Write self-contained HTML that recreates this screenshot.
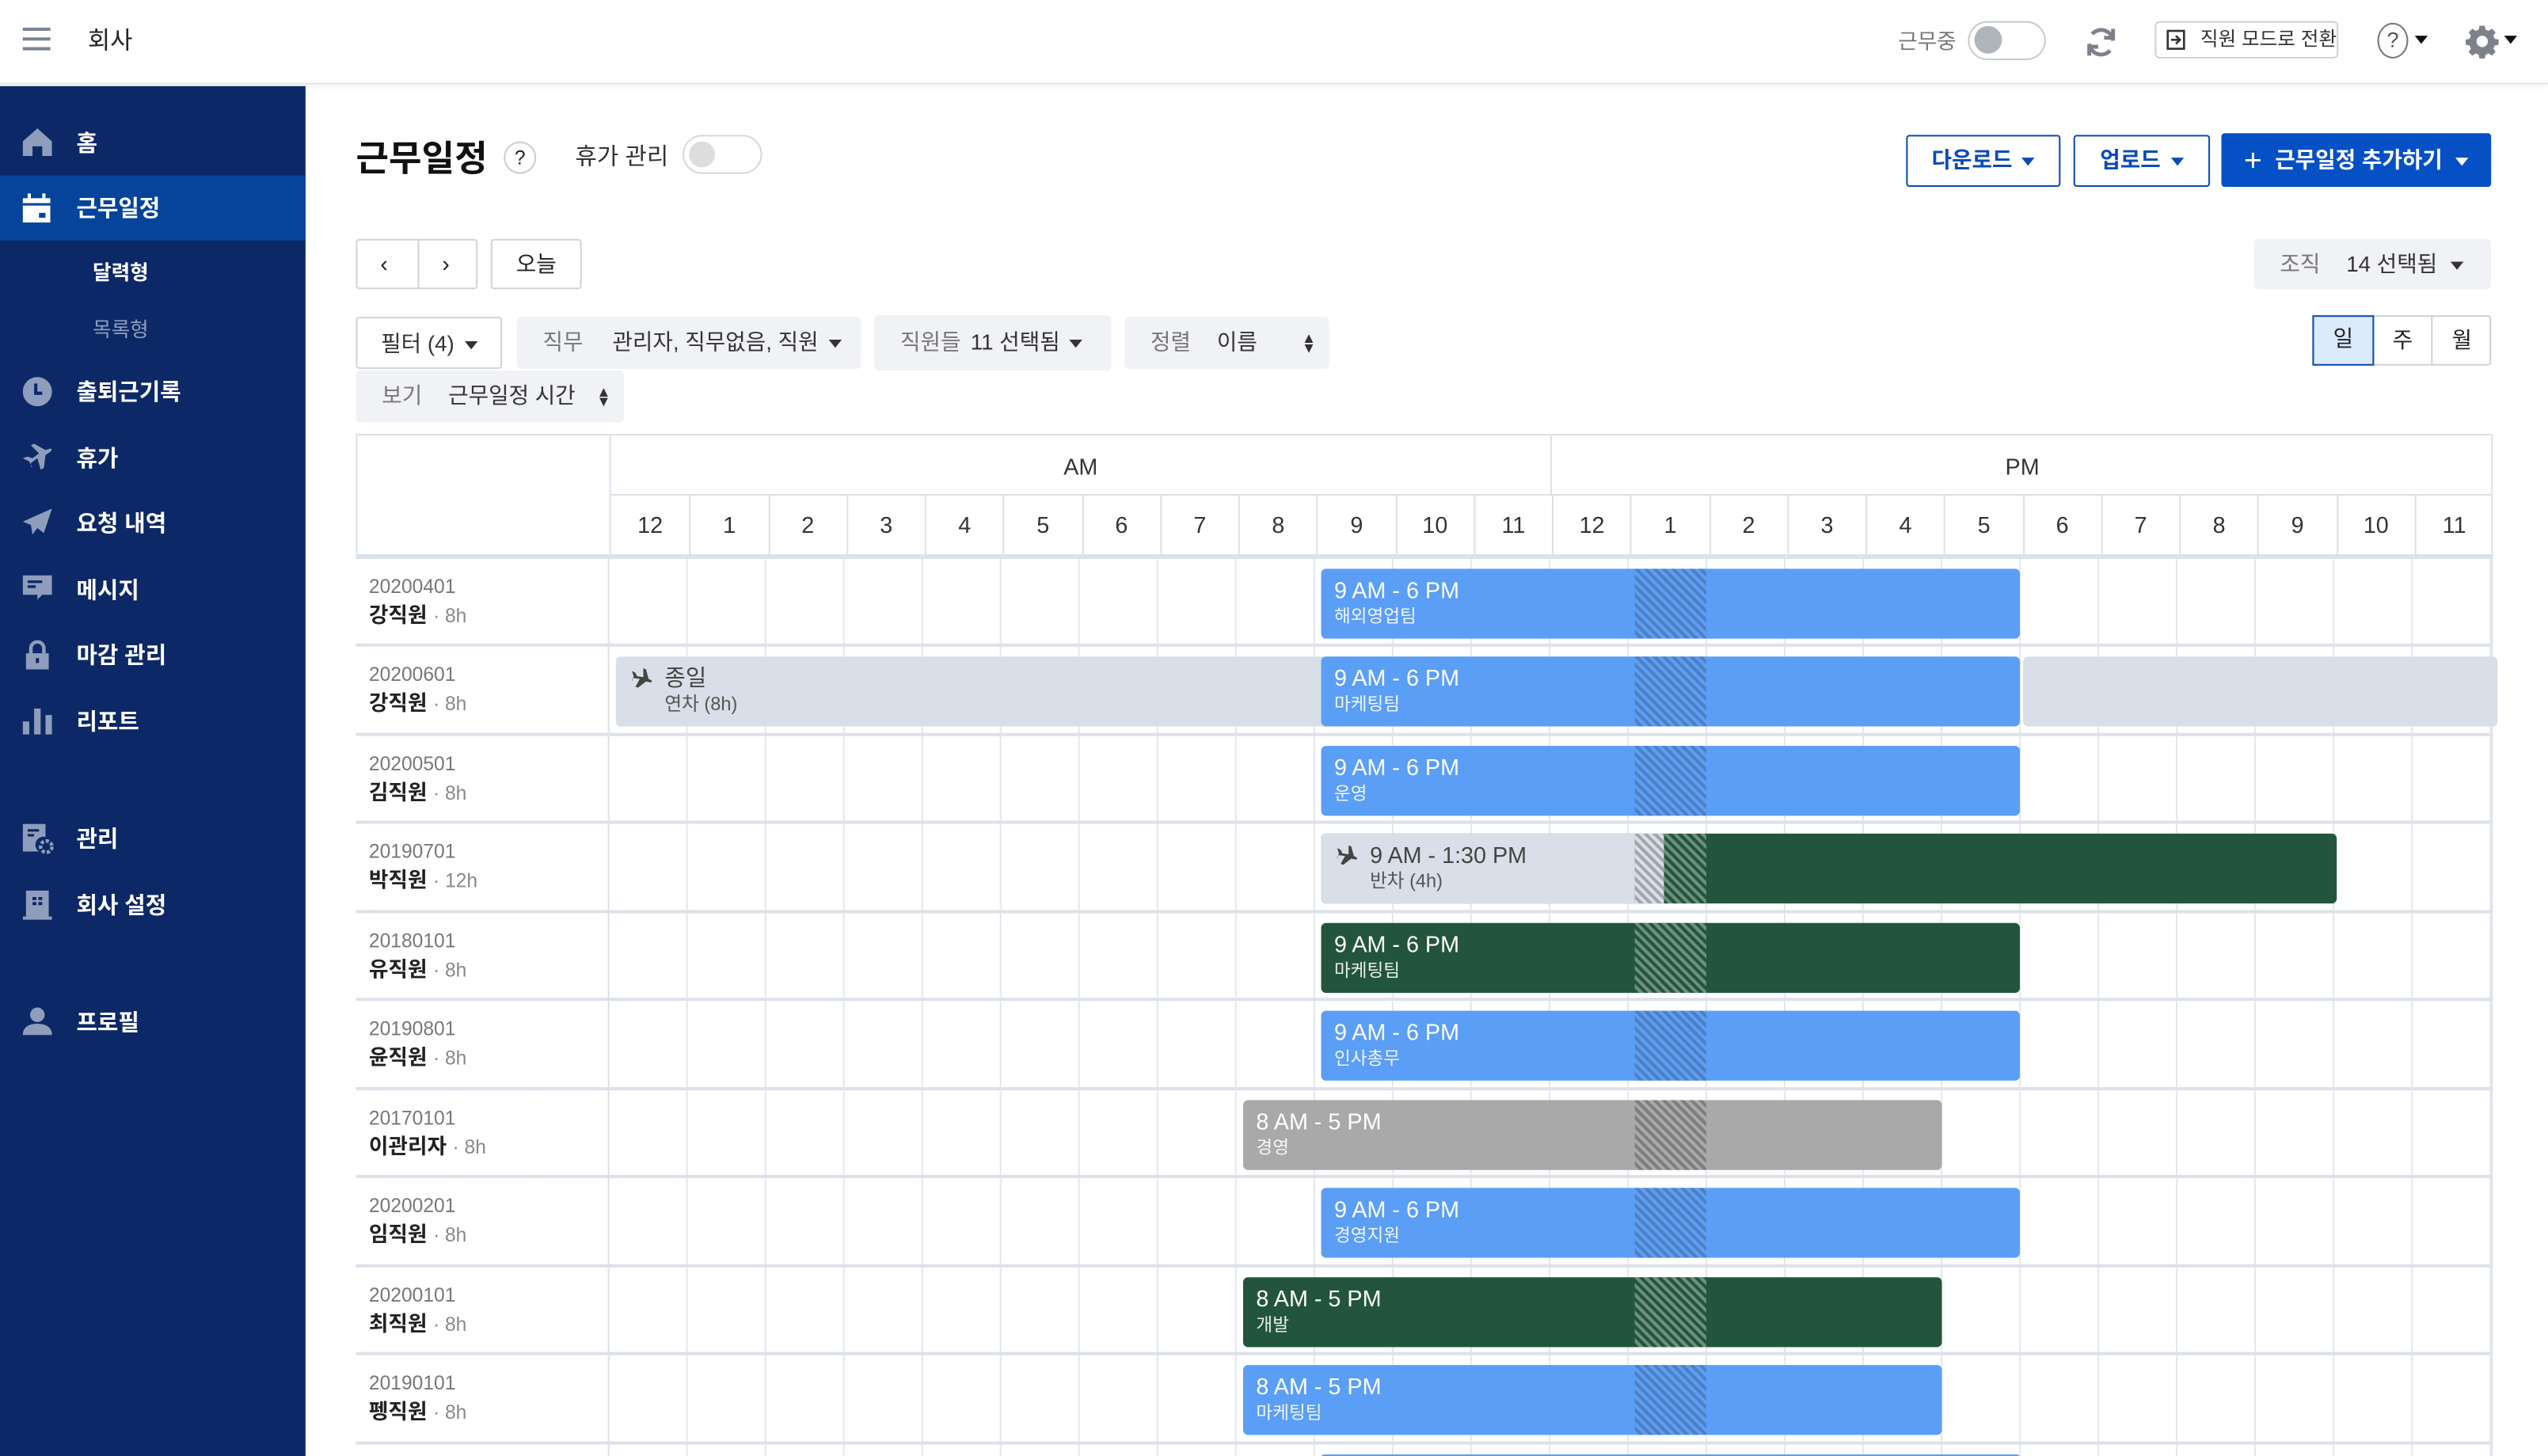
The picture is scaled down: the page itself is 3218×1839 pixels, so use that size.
<!DOCTYPE html>
<html><head><meta charset="utf-8">
<style>
*{box-sizing:border-box;margin:0;padding:0}
html,body{width:3218px;height:1839px;overflow:hidden;background:#fff}
body{font-family:"Liberation Sans","Noto Sans CJK KR",sans-serif;color:#222}
#w{position:absolute;left:0;top:0;width:3218px;height:1839px;overflow:hidden}
#s{width:1568px;height:896px;position:relative;transform:scale(2.05230,2.05246);transform-origin:0 0;overflow:hidden}
.a{position:absolute}
#hdr{left:0;top:0;width:1568px;height:52px;border-bottom:1px solid #e3e5e8;background:#fff;box-shadow:0 1px 4px rgba(0,0,0,.05)}
#side{left:0;top:53px;width:188px;height:843px;background:#0c2866}
.ni{position:absolute;left:0;width:188px;height:40px;color:#fff;font-size:14px;font-weight:bold;line-height:40px;padding-left:47px}
.ni svg{position:absolute;left:14px;top:11px}
.sub{position:absolute;left:57px;font-size:12.5px;font-weight:bold}
.btn{position:absolute;border:1px solid #d0d3d8;border-radius:2px;background:#fff;font-size:14px;text-align:center}
.gb{position:absolute;background:#f1f2f5;border-radius:3px;font-size:13.5px;color:#333;line-height:32px}
.gb .l{color:#777}
.tri{display:inline-block;width:0;height:0;border-left:4px solid transparent;border-right:4px solid transparent;border-top:5px solid currentColor;vertical-align:middle;margin-left:6px}
.upd{display:inline-block;font-size:9px;line-height:6px;vertical-align:middle;color:#333}
#grid{left:219px;top:267px;width:1315px;height:629px;border:1px solid #dde1e7;border-bottom:none}
.hc{position:absolute;top:37px;height:37px;width:48.25px;border-left:1px solid #dde1e7;text-align:center;line-height:37px;font-size:14px;color:#333}
.row{position:absolute;left:219px;width:1315px;height:55px;border-top:2px solid #dde2ea;background:repeating-linear-gradient(90deg,transparent 0,transparent 47.25px,#e4e7eb 47.25px,#e4e7eb 48.25px);background-position:156px 0;background-size:48.25px 100%}
.row .nm{position:absolute;left:0;top:0;width:156px;height:53px;background:#fff;border-right:1px solid #dde1e7;padding:8px 0 0 8px}
.nm .id{font-size:12px;color:#777;line-height:18px}
.nm .n{font-size:13px;font-weight:bold;color:#222;line-height:18px}
.nm .n span{font-weight:normal;color:#888;font-size:12px}
.bar{position:absolute;top:6px;height:43px;border-radius:3px;color:#fff;padding:4px 0 0 8px;overflow:hidden}
.bar .t{font-size:14px;line-height:18px;position:relative}
.bar .d{font-size:11px;line-height:17px;position:relative;opacity:.9}
.bl{background:#5b9ef6}
.gr{background:#23553d}
.gy{background:#a9a9a9}
.lv{background:#d9dfe8;color:#444}
.h{position:absolute;top:0;height:43px;width:44px}
.hb{background:repeating-linear-gradient(45deg,#5b9ef6 0,#5b9ef6 2px,#4f7fc0 2px,#4f7fc0 4px)}
.hg{background:repeating-linear-gradient(45deg,#23553d 0,#23553d 2px,#6d8f7d 2px,#6d8f7d 4px)}
.hy{background:repeating-linear-gradient(45deg,#a9a9a9 0,#a9a9a9 2px,#7e7e7e 2px,#7e7e7e 4px)}
.hl{background:repeating-linear-gradient(45deg,#d9dfe8 0,#d9dfe8 2px,#a2a6ac 2px,#a2a6ac 4px)}
</style></head><body><div id="w"><div id="s">

<div id="hdr" class="a">
  <div class="a" style="left:14px;top:17px;width:17px;height:2px;background:#7c8595;box-shadow:0 6px 0 #7c8595,0 12px 0 #7c8595"></div>
  <div class="a" style="left:54px;top:14px;font-size:15px">회사</div>
  <div class="a" style="left:1168px;top:15px;font-size:13px;color:#777">근무중</div>
  <div class="a" style="left:1211px;top:13px;width:48px;height:24px;border:1.5px solid #c8cbd0;border-radius:12px"><div class="a" style="left:3px;top:2px;width:17px;height:17px;border-radius:50%;background:#b0b4bb"></div></div>
  <svg class="a" style="left:1282px;top:15px" width="22" height="22" viewBox="0 0 24 24" fill="none" stroke="#7d818a" stroke-width="2.6"><path d="M20 11A8 8 0 0 0 6 6.5M4 13a8 8 0 0 0 14 4.5"/><path d="M20 3v6h-6" fill="none"/><path d="M4 21v-6h6"/></svg>
  <div class="a" style="left:1326px;top:13px;width:113px;height:23px;border:1px solid #cfd2d7;border-radius:3px;font-size:12px;line-height:21px;padding-left:27px;color:#333">직원 모드로 전환
    <svg class="a" style="left:6px;top:4px" width="12" height="13" viewBox="0 0 12 13" fill="none" stroke="#333" stroke-width="1.3"><rect x="1" y="1" width="10" height="11"/><path d="M3 6.5h5M6 4l2.5 2.5L6 9"/></svg></div>
  <div class="a" style="left:1463px;top:14px;width:19px;height:22px;border:1.4px solid #777;border-radius:50%;font-size:13px;text-align:center;line-height:20px;color:#555">?</div>
  <div class="a" style="left:1486px;top:22px;border-left:4px solid transparent;border-right:4px solid transparent;border-top:5px solid #111"></div>
  <svg class="a" style="left:1517px;top:15px" width="21" height="21" viewBox="0 0 24 24"><path fill="#7d818a" d="M10 1h4l.6 3 2.3 1 2.6-1.7 2.8 2.8L20.6 8.7l1 2.3 3 .6v4l-3 .6-1 2.3 1.7 2.6-2.8 2.8-2.6-1.7-2.3 1-.6 3h-4l-.6-3-2.3-1-2.6 1.7-2.8-2.8 1.7-2.6-1-2.3-3-.6v-4l3-.6 1-2.3L1.7 6.1l2.8-2.8L7.1 5l2.3-1z" transform="scale(.92) translate(1 0)"/><circle cx="12" cy="12" r="4" fill="#fff"/></svg>
  <div class="a" style="left:1541px;top:22px;border-left:4px solid transparent;border-right:4px solid transparent;border-top:5px solid #111"></div>
</div>

<div id="side" class="a">
  <div class="ni" style="top:15px"><svg width="18" height="17" viewBox="0 0 18 17"><path d="M9 0L0 8v9h6v-6h6v6h6V8z" fill="#8f9dbd"/></svg>홈</div>
  <div class="ni" style="top:55px;background:#05449a"><svg width="17" height="18" viewBox="0 0 17 18"><path d="M3 0h2v3h7V0h2v3h3v15H0V3h3z" fill="#fff"/><rect x="0" y="6" width="17" height="1.5" fill="#05449a"/><rect x="10" y="12" width="4" height="3" fill="#05449a"/></svg>근무일정</div>
  <div class="sub" style="top:104px;color:#fff">달력형</div>
  <div class="sub" style="top:139px;color:#8f9dbd;font-weight:normal">목록형</div>
  <div class="ni" style="top:168px"><svg width="18" height="18" viewBox="0 0 18 18"><circle cx="9" cy="9" r="9" fill="#8f9dbd"/><path d="M8 4v6h4" stroke="#0c2866" stroke-width="2" fill="none"/></svg>출퇴근기록</div>
  <div class="ni" style="top:209px"><svg width="18" height="17" viewBox="0 0 18 17"><path d="M0 9l3-1 3 1 4-3-5-5 2-1 7 4 3-1c1 0 1 1 0 2l-3 2-1 8-2 1-2-7-4 3v2L6 15l-2-4z" fill="#8f9dbd"/></svg>휴가</div>
  <div class="ni" style="top:249px"><svg width="18" height="17" viewBox="0 0 18 17"><path d="M18 0L0 8l5 2 1 6 3-4 4 3z" fill="#8f9dbd"/></svg>요청 내역</div>
  <div class="ni" style="top:290px"><svg width="18" height="17" viewBox="0 0 18 17"><path d="M0 0h18v12H12l-3 3v-3H0z" fill="#8f9dbd"/><path d="M3 4h9M3 7h5" stroke="#0c2866" stroke-width="1.6"/></svg>메시지</div>
  <div class="ni" style="top:330px"><svg width="18" height="18" viewBox="0 0 18 18"><path d="M5 8V5a4 4 0 0 1 8 0v3" stroke="#8f9dbd" stroke-width="2.2" fill="none"/><rect x="2" y="8" width="14" height="10" fill="#8f9dbd"/><rect x="8" y="11" width="2" height="3" fill="#0c2866"/></svg>마감 관리</div>
  <div class="ni" style="top:371px"><svg width="18" height="17" viewBox="0 0 18 17"><path d="M0 9h4v8H0zM7 1h4v16H7zM14 5h4v12h-4z" fill="#8f9dbd"/></svg>리포트</div>
  <div class="ni" style="top:443px"><svg width="19" height="19" viewBox="0 0 19 19"><path d="M0 0h14v8a5 5 0 0 0-4 9H0z" fill="#8f9dbd"/><path d="M3 4h7M3 7h4" stroke="#0c2866" stroke-width="1.5"/><circle cx="14.5" cy="14" r="3.5" fill="none" stroke="#8f9dbd" stroke-width="2.2" stroke-dasharray="2 1.2"/></svg>관리</div>
  <div class="ni" style="top:484px"><svg width="18" height="18" viewBox="0 0 18 18"><path d="M2 0h14v16h2v2H0v-2h2z" fill="#8f9dbd"/><path d="M6 4h6v5H6z" fill="#0c2866"/><path d="M9 4v5M6 6.5h6" stroke="#8f9dbd" stroke-width="1.2"/></svg>회사 설정</div>
  <div class="ni" style="top:556px"><svg width="18" height="17" viewBox="0 0 18 17"><circle cx="9" cy="4.5" r="4.5" fill="#8f9dbd"/><path d="M0 17c0-5 4-7 9-7s9 2 9 7z" fill="#8f9dbd"/></svg>프로필</div>
</div>

<div class="a" style="left:219px;top:80px;font-size:22px;font-weight:bold;color:#111">근무일정</div>
<div class="a" style="left:310px;top:87px;width:20px;height:20px;border:1px solid #ccc;border-radius:50%;font-size:12px;text-align:center;line-height:19px">?</div>
<div class="a" style="left:354px;top:85px;font-size:14.5px;color:#333">휴가 관리</div>
<div class="a" style="left:420px;top:83px;width:49px;height:24px;border:1.5px solid #d6d8dc;border-radius:12px"><div class="a" style="left:3px;top:3px;width:16px;height:16px;border-radius:50%;background:#ddd"></div></div>

<div class="btn" style="left:1173px;top:83px;width:95px;height:32px;border:1.5px solid #0a4bb5;color:#0a4bb5;font-weight:bold;line-height:29px;font-size:13.5px">다운로드<span class="tri"></span></div>
<div class="btn" style="left:1276px;top:83px;width:84px;height:32px;border:1.5px solid #0a4bb5;color:#0a4bb5;font-weight:bold;line-height:29px;font-size:13.5px">업로드<span class="tri"></span></div>
<div class="btn" style="left:1367px;top:82px;width:166px;height:33px;border:none;background:#0550c4;color:#fff;font-weight:bold;line-height:33px;font-size:13.5px"><span style="font-size:19px;font-weight:normal;vertical-align:-2px;margin-right:8px">+</span>근무일정 추가하기<span class="tri" style="margin-left:8px"></span></div>

<div class="btn" style="left:219px;top:147px;width:75px;height:31px;line-height:29px">
  <div class="a" style="left:37px;top:0;width:1px;height:29px;background:#d0d3d8"></div>
  <span class="a" style="left:14px;top:0">‹</span><span class="a" style="left:52px;top:0">›</span></div>
<div class="btn" style="left:302px;top:147px;width:56px;height:31px;line-height:29px;font-size:13.5px">오늘</div>

<div class="gb" style="left:1387px;top:147px;width:146px;height:31px;padding-left:16px"><span class="l">조직</span><span style="margin-left:16px">14 선택됨</span><span class="tri" style="margin-left:8px"></span></div>
<div class="a" style="left:1423px;top:194px;width:110px;height:31px;border:1px solid #cfd2d7;border-radius:2px;font-size:13.5px;line-height:29px">
  <div class="a" style="left:-1px;top:-1px;width:38px;height:31px;background:#dcebfc;border:1.5px solid #0a4bb5;text-align:center;line-height:28px">일</div>
  <div class="a" style="left:37px;top:0;width:36px;height:29px;border-right:1px solid #cfd2d7;text-align:center">주</div>
  <div class="a" style="left:73px;top:0;width:36px;height:29px;text-align:center">월</div>
</div>

<div class="btn" style="left:219px;top:195px;width:90px;height:32px;line-height:31px;font-size:13.5px;color:#333">필터 (4)<span class="tri"></span></div>
<div class="gb" style="left:318px;top:195px;width:212px;height:32px;padding-left:16px"><span class="l">직무</span><span style="margin-left:18px">관리자, 직무없음, 직원</span><span class="tri"></span></div>
<div class="gb" style="left:538px;top:194px;width:146px;height:34px;padding-left:16px;line-height:33px"><span class="l">직원들</span><span style="margin-left:6px">11 선택됨</span><span class="tri"></span></div>
<div class="gb" style="left:692px;top:195px;width:126px;height:32px;padding-left:16px"><span class="l">정렬</span><span style="margin-left:16px">이름</span><span class="upd a" style="left:109px;top:10px">▲<br>▼</span></div>
<div class="gb" style="left:219px;top:228px;width:165px;height:32px;padding-left:16px"><span class="l">보기</span><span style="margin-left:16px">근무일정 시간</span><span class="upd a" style="left:148px;top:10px">▲<br>▼</span></div>

<div id="grid" class="a">
  <div class="a" style="left:155px;top:0;width:1px;height:75px;background:#dde1e7"></div>
  <div class="a" style="left:156px;top:36px;width:1158px;height:1px;background:#dde1e7"></div>
  <div class="a" style="left:734px;top:0;width:1px;height:37px;background:#dde1e7"></div>
  <div class="a" style="left:156px;top:8px;width:578px;text-align:center;font-size:14px;line-height:22px;color:#333">AM</div>
  <div class="a" style="left:735px;top:8px;width:579px;text-align:center;font-size:14px;line-height:22px;color:#333">PM</div>
  <div class="hc" style="left:156px;border-left:none">12</div><div class="hc" style="left:204.25px">1</div><div class="hc" style="left:252.5px">2</div><div class="hc" style="left:300.75px">3</div><div class="hc" style="left:349px">4</div><div class="hc" style="left:397.25px">5</div><div class="hc" style="left:445.5px">6</div><div class="hc" style="left:493.75px">7</div><div class="hc" style="left:542px">8</div><div class="hc" style="left:590.25px">9</div><div class="hc" style="left:638.5px">10</div><div class="hc" style="left:686.75px">11</div>
  <div class="hc" style="left:735px">12</div><div class="hc" style="left:783.25px">1</div><div class="hc" style="left:831.5px">2</div><div class="hc" style="left:879.75px">3</div><div class="hc" style="left:928px">4</div><div class="hc" style="left:976.25px">5</div><div class="hc" style="left:1024.5px">6</div><div class="hc" style="left:1072.75px">7</div><div class="hc" style="left:1121px">8</div><div class="hc" style="left:1169.25px">9</div><div class="hc" style="left:1217.5px">10</div><div class="hc" style="left:1265.75px">11</div>
</div>

<div class="row" style="top:341px;border-top:3px solid #dde2ea">
  <div class="nm"><div class="id">20200401</div><div class="n">강직원 <span>· 8h</span></div></div>
  <div class="bar bl" style="left:594px;width:430px"><div class="h hb" style="left:193px"></div><div class="t">9 AM - 6 PM</div><div class="d">해외영업팀</div></div>
</div>
<div class="row" style="top:396px">
  <div class="nm"><div class="id">20200601</div><div class="n">강직원 <span>· 8h</span></div></div>
  <div class="bar lv" style="left:160px;width:440px;padding-left:30px"><svg class="a" style="left:8px;top:7px" width="14" height="13" viewBox="0 0 18 17"><path d="M0 9l3-1 3 1 4-3-5-5 2-1 7 4 3-1c1 0 1 1 0 2l-3 2-1 8-2 1-2-7-4 3v2L6 15l-2-4z" fill="#444" transform="rotate(45 9 8.5)"/></svg><div class="t">종일</div><div class="d" style="opacity:1;color:#555;font-size:11.5px">연차 (8h)</div></div>
  <div class="bar lv" style="left:1026px;width:292px"></div>
  <div class="bar bl" style="left:594px;width:430px"><div class="h hb" style="left:193px"></div><div class="t">9 AM - 6 PM</div><div class="d">마케팅팀</div></div>
</div>
<div class="row" style="top:451px">
  <div class="nm"><div class="id">20200501</div><div class="n">김직원 <span>· 8h</span></div></div>
  <div class="bar bl" style="left:594px;width:430px"><div class="h hb" style="left:193px"></div><div class="t">9 AM - 6 PM</div><div class="d">운영</div></div>
</div>
<div class="row" style="top:505px">
  <div class="nm"><div class="id">20190701</div><div class="n">박직원 <span>· 12h</span></div></div>
  <div class="bar gr" style="left:594px;width:625px"><div class="h hl" style="left:193px;width:18px"></div><div class="h hg" style="left:211px;width:26px"></div></div>
  <div class="bar lv" style="left:594px;width:193px;padding-left:30px;border-radius:3px 0 0 3px"><svg class="a" style="left:8px;top:7px" width="14" height="13" viewBox="0 0 18 17"><path d="M0 9l3-1 3 1 4-3-5-5 2-1 7 4 3-1c1 0 1 1 0 2l-3 2-1 8-2 1-2-7-4 3v2L6 15l-2-4z" fill="#444" transform="rotate(45 9 8.5)"/></svg><div class="t">9 AM - 1:30 PM</div><div class="d" style="opacity:1;color:#555;font-size:11.5px">반차 (4h)</div></div>
</div>
<div class="row" style="top:560px">
  <div class="nm"><div class="id">20180101</div><div class="n">유직원 <span>· 8h</span></div></div>
  <div class="bar gr" style="left:594px;width:430px"><div class="h hg" style="left:193px"></div><div class="t">9 AM - 6 PM</div><div class="d">마케팅팀</div></div>
</div>
<div class="row" style="top:614px">
  <div class="nm"><div class="id">20190801</div><div class="n">윤직원 <span>· 8h</span></div></div>
  <div class="bar bl" style="left:594px;width:430px"><div class="h hb" style="left:193px"></div><div class="t">9 AM - 6 PM</div><div class="d">인사총무</div></div>
</div>
<div class="row" style="top:669px">
  <div class="nm"><div class="id">20170101</div><div class="n">이관리자 <span>· 8h</span></div></div>
  <div class="bar gy" style="left:546px;width:430px"><div class="h hy" style="left:241px"></div><div class="t">8 AM - 5 PM</div><div class="d">경영</div></div>
</div>
<div class="row" style="top:723px">
  <div class="nm"><div class="id">20200201</div><div class="n">임직원 <span>· 8h</span></div></div>
  <div class="bar bl" style="left:594px;width:430px"><div class="h hb" style="left:193px"></div><div class="t">9 AM - 6 PM</div><div class="d">경영지원</div></div>
</div>
<div class="row" style="top:778px">
  <div class="nm"><div class="id">20200101</div><div class="n">최직원 <span>· 8h</span></div></div>
  <div class="bar gr" style="left:546px;width:430px"><div class="h hg" style="left:241px"></div><div class="t">8 AM - 5 PM</div><div class="d">개발</div></div>
</div>
<div class="row" style="top:832px">
  <div class="nm"><div class="id">20190101</div><div class="n">펭직원 <span>· 8h</span></div></div>
  <div class="bar bl" style="left:546px;width:430px"><div class="h hb" style="left:241px"></div><div class="t">8 AM - 5 PM</div><div class="d">마케팅팀</div></div>
</div>
<div class="row" style="top:887px;height:9px">
  <div class="nm" style="height:9px"></div>
  <div class="bar bl" style="left:594px;width:430px;height:3px"></div>
</div>

</div></div></body></html>
